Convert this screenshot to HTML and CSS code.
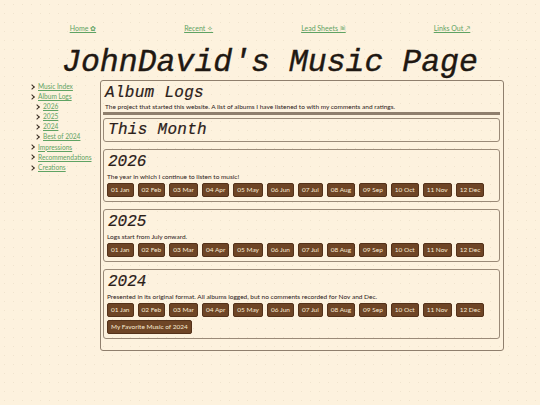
FILE: index.html
```html
<!DOCTYPE html>
<html>
<head>
<meta charset="utf-8">
<link rel="stylesheet" href="styles.css">
</head>
<body>
<nav class="topnav">
  <a href="#">Home ✿</a>
  <a href="#">Recent ✧</a>
  <a href="#">Lead Sheets 🗎</a>
  <a href="#">Links Out ↗</a>
</nav>
<h1 class="site-title">JohnDavid's Music Page</h1>
<div class="layout">
  <aside class="sidebar">
    <ul class="tree">
      <li><a href="#">Music Index</a></li>
      <li><a href="#">Album Logs</a>
        <ul class="tree sub">
          <li><a href="#">2026</a></li>
          <li><a href="#">2025</a></li>
          <li><a href="#">2024</a></li>
          <li><a href="#">Best of 2024</a></li>
        </ul>
      </li>
      <li><a href="#">Impressions</a></li>
      <li><a href="#">Recommendations</a></li>
      <li><a href="#">Creations</a></li>
    </ul>
  </aside>
  <main class="panel">
    <header class="panel-head">
      <h2 class="page-title">Album Logs</h2>
      <p class="desc">The project that started this website. A list of albums I have listened to with my comments and ratings.</p>
    </header>
    <section class="box month">
      <h3 class="box-title">This Month</h3>
    </section>
    <section class="box">
      <h3 class="year">2026</h3>
      <p class="desc">The year in which I continue to listen to music!</p>
      <div class="months">
        <a class="btn">01 Jan</a><a class="btn">02 Feb</a><a class="btn">03 Mar</a><a class="btn">04 Apr</a><a class="btn">05 May</a><a class="btn">06 Jun</a><a class="btn">07 Jul</a><a class="btn">08 Aug</a><a class="btn">09 Sep</a><a class="btn">10 Oct</a><a class="btn">11 Nov</a><a class="btn">12 Dec</a>
      </div>
    </section>
    <section class="box">
      <h3 class="year">2025</h3>
      <p class="desc">Logs start from July onward.</p>
      <div class="months">
        <a class="btn">01 Jan</a><a class="btn">02 Feb</a><a class="btn">03 Mar</a><a class="btn">04 Apr</a><a class="btn">05 May</a><a class="btn">06 Jun</a><a class="btn">07 Jul</a><a class="btn">08 Aug</a><a class="btn">09 Sep</a><a class="btn">10 Oct</a><a class="btn">11 Nov</a><a class="btn">12 Dec</a>
      </div>
    </section>
    <section class="box">
      <h3 class="year">2024</h3>
      <p class="desc">Presented in its original format. All albums logged, but no comments recorded for Nov and Dec.</p>
      <div class="months">
        <a class="btn">01 Jan</a><a class="btn">02 Feb</a><a class="btn">03 Mar</a><a class="btn">04 Apr</a><a class="btn">05 May</a><a class="btn">06 Jun</a><a class="btn">07 Jul</a><a class="btn">08 Aug</a><a class="btn">09 Sep</a><a class="btn">10 Oct</a><a class="btn">11 Nov</a><a class="btn">12 Dec</a>
      </div>
      <div class="months extra">
        <a class="btn">My Favorite Music of 2024</a>
      </div>
    </section>
  </main>
</div>
</body>
</html>
```
FILE: styles.css
```css
html, body {
  margin: 0;
  padding: 0;
}
body {
  background-color: #fdf2de;
  background-image: radial-gradient(circle, rgba(180, 160, 130, 0.16) 0.6px, transparent 0.9px);
  background-size: 9px 9px;
  color: #2b2019;
  font-family: Lato, "Noto Sans", sans-serif;
  width: 540px;
  height: 405px;
  overflow: hidden;
}
a {
  color: #5fa363;
}
.topnav {
  display: flex;
  justify-content: center;
  gap: 88px;
  padding-top: 23px;
  font-size: 7px;
  line-height: 10px;
}
.site-title {
  margin: 10px 0 0;
  text-align: center;
  font-family: "Liberation Mono", monospace;
  font-style: italic;
  font-weight: normal;
  font-size: 31.5px;
  line-height: 40px;
  color: #1f1812;
  -webkit-text-stroke: 0.4px #1f1812;
}
.layout {
  display: flex;
  margin-top: -3px;
}
.sidebar {
  width: 100px;
  flex: none;
  padding-top: 1px;
}
.tree {
  list-style: none;
  margin: 0;
  padding: 0 0 0 30px;
  font-size: 6.6px;
  line-height: 10.1px;
}
.tree.sub {
  padding-left: 5px;
}
.tree li::before {
  content: "";
  display: inline-block;
  width: 3px;
  height: 3px;
  border-top: 0.8px solid #3a2d22;
  border-right: 0.8px solid #3a2d22;
  transform: rotate(45deg);
  margin: 0 4px 1px 0;
  vertical-align: middle;
}
.panel {
  width: 404px;
  box-sizing: border-box;
  border: 1px solid #8f7f6d;
  border-radius: 3px;
  padding: 3px 3px 4px 2px;
}
.panel-head {
  padding: 0 1px 1px 2px;
  border-bottom: 3px solid #8f7f6d;
  margin-bottom: 3px;
}
.page-title {
  margin: 0;
  font-family: "Liberation Mono", monospace;
  font-style: italic;
  font-weight: normal;
  font-size: 16px;
  line-height: 18px;
  letter-spacing: 0.3px;
  -webkit-text-stroke: 0.2px #2b2019;
}
.desc {
  margin: 0;
  font-size: 6.5px;
  line-height: 9px;
}
.box {
  border: 1px solid #9a8a78;
  border-radius: 3px;
  padding: 2px 2px 4px 3px;
  margin-bottom: 7px;
}
.box.month {
  padding-top: 1px;
  padding-bottom: 1px;
}
.box-title {
  margin: 0 0 0 1px;
  font-family: "Liberation Mono", monospace;
  font-style: italic;
  font-weight: normal;
  font-size: 16px;
  line-height: 20px;
  letter-spacing: 0.3px;
  -webkit-text-stroke: 0.2px #2b2019;
}
.year {
  margin: 0 0 0 1px;
  font-family: "Liberation Mono", monospace;
  font-style: italic;
  font-weight: normal;
  font-size: 16px;
  line-height: 20px;
  -webkit-text-stroke: 0.2px #2b2019;
}
.months {
  display: flex;
  flex-wrap: wrap;
  gap: 4px;
  margin-top: 2px;
}
.months.extra {
  margin-top: 3px;
}
.btn {
  display: inline-block;
  background: #6e4526;
  color: #f8ead3;
  border: 1px solid #54321a;
  border-radius: 2px;
  padding: 0 3px;
  font-size: 6.5px;
  line-height: 12px;
  white-space: nowrap;
}
```
